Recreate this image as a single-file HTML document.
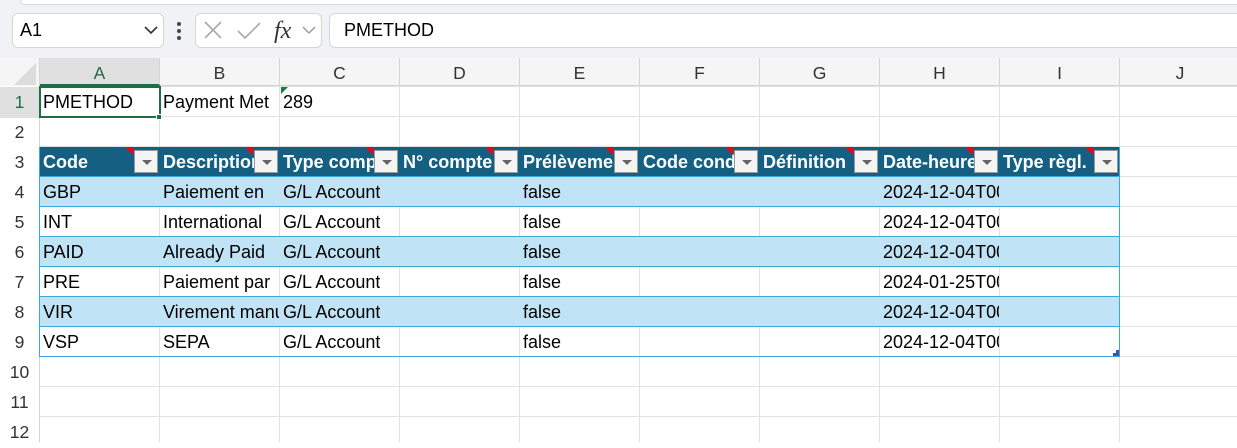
<!DOCTYPE html>
<html><head><meta charset="utf-8"><style>
*{margin:0;padding:0;box-sizing:border-box}
body{width:1237px;height:442px;overflow:hidden;background:#fff;font-family:"Liberation Sans",sans-serif;position:relative}
.tb{position:absolute;left:0;top:0;width:1237px;height:58px;background:#f0f2f5}
.topstrip{position:absolute;left:20px;top:0;width:1217px;height:5px;background:#fff;border-bottom:1px solid #d8d8d8;border-left:1px solid #d8d8d8;border-radius:0 0 0 5px}
.box{position:absolute;background:#fff;border:1px solid #d6d6d6;border-radius:6px}
.a{position:absolute;white-space:nowrap;overflow:hidden;font-size:18px;line-height:31px;color:#000}
.grid{position:absolute;left:0;top:58px;width:1237px;height:384px;
background-image:linear-gradient(to right,transparent 119px,#e1e1e1 119px),linear-gradient(to bottom,transparent 29px,#e1e1e1 29px);
background-size:120px 100%,100% 30px;background-position:40px 0,0 -1px}
.colh{position:absolute;top:58px;height:28px;left:0;width:1237px;background:#f5f5f5;border-bottom:1px solid #d4d4d4}
.ch{position:absolute;top:58px;height:28px;width:120px;text-align:center;font-size:17.5px;line-height:30px;color:#333;border-right:1px solid #d4d4d4}
.rowh{position:absolute;left:0;top:86px;width:40px;height:356px;background:#fff;border-right:1px solid #d4d4d4}
.rh{position:absolute;left:0;width:39px;text-align:center;font-size:17.5px;line-height:31px;color:#333}
.row{position:absolute;left:40px;width:1080px;height:30px}
.blue{background:#c0e4f5}
.hdr{position:absolute;left:40px;top:147px;width:1080px;height:30px;background:#155f82}
.h{position:absolute;top:147px;height:30px;width:94px;color:#fff;font-weight:bold;font-size:18px;line-height:31px;white-space:nowrap;overflow:hidden;padding-left:3px}
.dd{position:absolute;top:150px;width:24px;height:23px;background:#f4f4f4;border:1px solid #999;}
.dd:after{content:"";position:absolute;left:7px;top:9px;border-left:5px solid transparent;border-right:5px solid transparent;border-top:5px solid #666}
.tri{position:absolute;top:147px;width:0;height:0;border-left:8px solid transparent;border-top:8px solid #f00}
.hl{position:absolute;background:#3ba9dc}
</style></head><body>
<div class="tb"></div>
<div class="topstrip"></div>
<div class="box" style="left:12px;top:13px;width:152px;height:35px"></div>
<div class="a" style="left:20px;top:15px;font-size:18px">A1</div>
<svg style="position:absolute;left:143px;top:25px" width="16" height="10"><path d="M2 2 L8 8 L14 2" stroke="#333" stroke-width="1.6" fill="none"/></svg>
<div style="position:absolute;left:177px;top:22px;width:4px;height:4px;background:#444;border-radius:2px"></div>
<div style="position:absolute;left:177px;top:29px;width:4px;height:4px;background:#444;border-radius:2px"></div>
<div style="position:absolute;left:177px;top:36px;width:4px;height:4px;background:#444;border-radius:2px"></div>
<div class="box" style="left:195px;top:13px;width:127px;height:35px"></div>
<svg style="position:absolute;left:200px;top:18px" width="120" height="26"><path d="M5 4 L21 20 M21 4 L5 20" stroke="#aaa" stroke-width="1.6"/><path d="M38 13 L45 20 L60 5" stroke="#aaa" stroke-width="1.6" fill="none"/><text x="74" y="20" font-family="Liberation Serif" font-style="italic" font-size="24" fill="#333">fx</text><path d="M103 9 L109 15 L115 9" stroke="#999" stroke-width="1.4" fill="none"/></svg>
<div class="box" style="left:329px;top:13px;width:920px;height:35px"></div>
<div class="a" style="left:344px;top:15px;font-size:18px">PMETHOD</div>

<div class="grid"></div>
<div class="colh"></div>
<div style="position:absolute;left:0;top:58px;width:40px;height:28px;background:#f5f5f5;border-right:1px solid #d4d4d4"></div>
<svg style="position:absolute;left:14px;top:63px" width="22" height="22"><path d="M22 0 L22 22 L0 22Z" fill="#dcdcdc"/></svg>
<div class="ch" style="left:40px;background:#e0e0e0;color:#1f6e43;border-bottom:2px solid #1f6e43">A</div>
<div class="ch" style="left:160px">B</div><div class="ch" style="left:280px">C</div><div class="ch" style="left:400px">D</div><div class="ch" style="left:520px">E</div><div class="ch" style="left:640px">F</div><div class="ch" style="left:760px">G</div><div class="ch" style="left:880px">H</div><div class="ch" style="left:1000px">I</div><div class="ch" style="left:1120px;border:0">J</div>
<div class="rowh"></div>
<div class="rh" style="top:87px;background:#e0e0e0;color:#1f6e43">1</div>
<div class="rh" style="top:117px">2</div><div class="rh" style="top:147px">3</div><div class="rh" style="top:177px">4</div><div class="rh" style="top:207px">5</div><div class="rh" style="top:237px">6</div><div class="rh" style="top:267px">7</div><div class="rh" style="top:297px">8</div><div class="rh" style="top:327px">9</div><div class="rh" style="top:357px">10</div><div class="rh" style="top:387px">11</div><div class="rh" style="top:417px">12</div>

<div class="a" style="left:43px;top:87px">PMETHOD</div>
<div class="a" style="left:163px;top:87px;width:116px">Payment Met</div>
<div class="a" style="left:283px;top:87px">289</div>
<div style="position:absolute;left:281px;top:87px;border-right:7px solid transparent;border-top:7px solid #1f7a3e"></div>
<div style="position:absolute;left:39px;top:86px;width:122px;height:32px;border:2px solid #1f6e43"></div>
<div style="position:absolute;left:156px;top:114px;width:6px;height:6px;background:#1f6e43;border:1px solid #fff"></div>

<div class="hdr"></div>
<div class="h" style="left:40px">Code</div><div class="h" style="left:160px">Description</div><div class="h" style="left:280px">Type compte</div><div class="h" style="left:400px">N° compte</div><div class="h" style="left:520px">Prélèvement</div><div class="h" style="left:640px">Code cond</div><div class="h" style="left:760px">Définition</div><div class="h" style="left:880px">Date-heure</div><div class="h" style="left:1000px">Type règl.</div>
<div class="tri" style="left:125px"></div><div class="tri" style="left:245px"></div><div class="tri" style="left:365px"></div><div class="tri" style="left:485px"></div><div class="tri" style="left:605px"></div><div class="tri" style="left:725px"></div><div class="tri" style="left:845px"></div><div class="tri" style="left:965px"></div><div class="tri" style="left:1085px"></div>
<div class="dd" style="left:134px"></div><div class="dd" style="left:254px"></div><div class="dd" style="left:374px"></div><div class="dd" style="left:494px"></div><div class="dd" style="left:614px"></div><div class="dd" style="left:734px"></div><div class="dd" style="left:854px"></div><div class="dd" style="left:974px"></div><div class="dd" style="left:1094px"></div>

<div class="row blue" style="top:177px"></div>
<div class="row blue" style="top:237px"></div>
<div class="row blue" style="top:297px"></div>
<div class="hl" style="left:40px;top:176px;width:1080px;height:1px"></div>
<div class="hl" style="left:40px;top:206px;width:1080px;height:1px"></div>
<div class="hl" style="left:40px;top:236px;width:1080px;height:1px"></div>
<div class="hl" style="left:40px;top:266px;width:1080px;height:1px"></div>
<div class="hl" style="left:40px;top:296px;width:1080px;height:1px"></div>
<div class="hl" style="left:40px;top:326px;width:1080px;height:1px"></div>
<div class="hl" style="left:40px;top:356px;width:1080px;height:1px"></div>
<div class="hl" style="left:1119px;top:147px;width:1px;height:210px"></div>
<div class="hl" style="left:39px;top:147px;width:1px;height:210px"></div>
<div style="position:absolute;left:1113px;top:353px;width:6px;height:3px;background:#3f51b5"></div>
<div style="position:absolute;left:1116px;top:350px;width:3px;height:6px;background:#3f51b5"></div>

<div class="a" style="left:43px;top:177px">GBP</div><div class="a" style="left:163px;top:177px;width:116px">Paiement en</div><div class="a" style="left:283px;top:177px">G/L Account</div><div class="a" style="left:523px;top:177px">false</div><div class="a" style="left:883px;top:177px;width:116px">2024-12-04T00</div>
<div class="a" style="left:43px;top:207px">INT</div><div class="a" style="left:163px;top:207px;width:116px">International</div><div class="a" style="left:283px;top:207px">G/L Account</div><div class="a" style="left:523px;top:207px">false</div><div class="a" style="left:883px;top:207px;width:116px">2024-12-04T00</div>
<div class="a" style="left:43px;top:237px">PAID</div><div class="a" style="left:163px;top:237px;width:116px">Already Paid</div><div class="a" style="left:283px;top:237px">G/L Account</div><div class="a" style="left:523px;top:237px">false</div><div class="a" style="left:883px;top:237px;width:116px">2024-12-04T00</div>
<div class="a" style="left:43px;top:267px">PRE</div><div class="a" style="left:163px;top:267px;width:116px">Paiement par</div><div class="a" style="left:283px;top:267px">G/L Account</div><div class="a" style="left:523px;top:267px">false</div><div class="a" style="left:883px;top:267px;width:116px">2024-01-25T00</div>
<div class="a" style="left:43px;top:297px">VIR</div><div class="a" style="left:163px;top:297px;width:116px">Virement manuel</div><div class="a" style="left:283px;top:297px">G/L Account</div><div class="a" style="left:523px;top:297px">false</div><div class="a" style="left:883px;top:297px;width:116px">2024-12-04T00</div>
<div class="a" style="left:43px;top:327px">VSP</div><div class="a" style="left:163px;top:327px;width:116px">SEPA</div><div class="a" style="left:283px;top:327px">G/L Account</div><div class="a" style="left:523px;top:327px">false</div><div class="a" style="left:883px;top:327px;width:116px">2024-12-04T00</div>
</body></html>
